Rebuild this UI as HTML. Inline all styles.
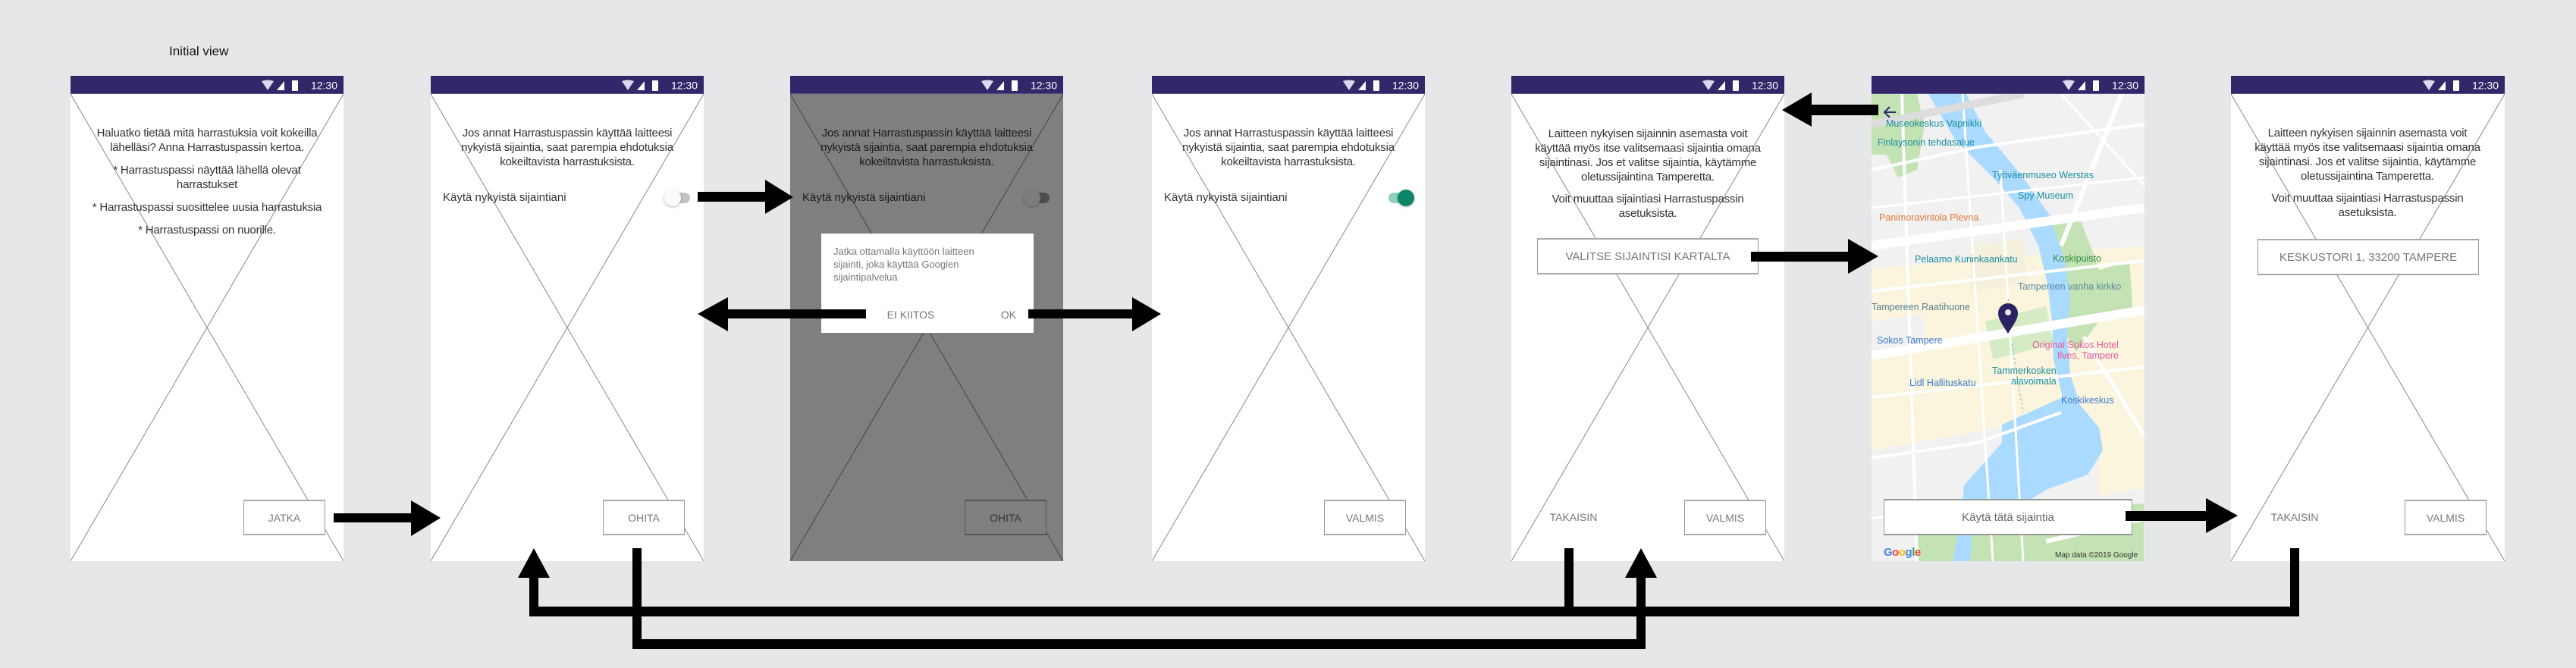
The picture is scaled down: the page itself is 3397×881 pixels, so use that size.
<!DOCTYPE html>
<html><head><meta charset="utf-8"><style>
*{margin:0;padding:0;box-sizing:border-box}
body{width:3397px;height:881px;background:#e6e7e9;position:relative;overflow:hidden;font-family:"Liberation Sans",sans-serif}
.ph{position:absolute;top:100px;width:360px;height:640px;background:#fff;overflow:hidden}
.sb{position:absolute;left:0;top:0;width:100%;height:24px;background:#33276a;border-bottom:1px solid #5a4f8c}
.sb svg{position:absolute;right:8px;top:4px}
.x{position:absolute;left:0;top:24px;width:100%;height:616px}
.t{position:absolute;left:0;width:360px;text-align:center;font-size:15px;line-height:19px;color:#333;white-space:nowrap;letter-spacing:-0.2px}
.btn{position:absolute;background:#fff;border:1px solid #999;border-top:2px solid #aaa;border-bottom:2px solid #aaa;color:#777;font-size:14px;display:flex;align-items:center;justify-content:center;white-space:nowrap}
.lbl{position:absolute;font-size:15px;color:#333;white-space:nowrap}
.ml{position:absolute;font-size:12.5px;white-space:nowrap;line-height:14px}
</style></head><body>
<div style="position:absolute;left:223px;top:58px;font-size:17px;color:#111">Initial view</div>

<!-- Phone 1 -->
<div class="ph" style="left:93px">
<svg class="x" viewBox="0 0 360 616" preserveAspectRatio="none"><line x1="0" y1="0" x2="360" y2="616" stroke="#888" stroke-width="1"/><line x1="360" y1="0" x2="0" y2="616" stroke="#888" stroke-width="1"/></svg>
<div class="sb"><svg width="100" height="17" viewBox="0 0 100 17"><path d="M0 3 Q8 0 16 3 L8 15Z" fill="#ddd8ee"/><path d="M20 15 L30 3 L30 15Z" fill="#fff"/><rect x="40" y="2" width="8" height="14" rx="1" fill="#fff"/><text x="100" y="13.5" text-anchor="end" font-size="14" fill="#fff" font-family="Liberation Sans">12:30</text></svg></div>
<div class="t" style="top:66px">Haluatko tietää mitä harrastuksia voit kokeilla<br>lähelläsi? Anna Harrastuspassin kertoa.</div>
<div class="t" style="top:115px">* Harrastuspassi näyttää lähellä olevat<br>harrastukset</div>
<div class="t" style="top:164px">* Harrastuspassi suosittelee uusia harrastuksia</div>
<div class="t" style="top:194px">* Harrastuspassi on nuorille.</div>
<div class="btn" style="left:228px;top:559px;width:108px;height:47px">JATKA</div>
</div>

<!-- Phone 2 -->
<div class="ph" style="left:568px">
<svg class="x" viewBox="0 0 360 616" preserveAspectRatio="none"><line x1="0" y1="0" x2="360" y2="616" stroke="#888" stroke-width="1"/><line x1="360" y1="0" x2="0" y2="616" stroke="#888" stroke-width="1"/></svg>
<div class="sb"><svg width="100" height="17" viewBox="0 0 100 17"><path d="M0 3 Q8 0 16 3 L8 15Z" fill="#ddd8ee"/><path d="M20 15 L30 3 L30 15Z" fill="#fff"/><rect x="40" y="2" width="8" height="14" rx="1" fill="#fff"/><text x="100" y="13.5" text-anchor="end" font-size="14" fill="#fff" font-family="Liberation Sans">12:30</text></svg></div>
<div class="t" style="top:66px">Jos annat Harrastuspassin käyttää laitteesi<br>nykyistä sijaintia, saat parempia ehdotuksia<br>kokeiltavista harrastuksista.</div>
<div class="lbl" style="left:16px;top:152px">Käytä nykyistä sijaintiani</div>
<div style="position:absolute;left:312px;top:154px;width:30px;height:14px;border-radius:7px;background:#c4c4c4"></div>
<div style="position:absolute;left:308px;top:150px;width:22px;height:22px;border-radius:11px;background:#fafafa;box-shadow:0 1px 3px rgba(0,0,0,.3)"></div>
<div class="btn" style="left:227px;top:559px;width:108px;height:47px">OHITA</div>
</div>

<!-- Phone 3 -->
<div class="ph" style="left:1042px;background:#7f807e">
<svg class="x" viewBox="0 0 360 616" preserveAspectRatio="none"><line x1="0" y1="0" x2="360" y2="616" stroke="#444" stroke-width="1"/><line x1="360" y1="0" x2="0" y2="616" stroke="#444" stroke-width="1"/></svg>
<div class="sb"><svg width="100" height="17" viewBox="0 0 100 17"><path d="M0 3 Q8 0 16 3 L8 15Z" fill="#ddd8ee"/><path d="M20 15 L30 3 L30 15Z" fill="#fff"/><rect x="40" y="2" width="8" height="14" rx="1" fill="#fff"/><text x="100" y="13.5" text-anchor="end" font-size="14" fill="#fff" font-family="Liberation Sans">12:30</text></svg></div>
<div class="t" style="top:66px;color:#1a1a1a">Jos annat Harrastuspassin käyttää laitteesi<br>nykyistä sijaintia, saat parempia ehdotuksia<br>kokeiltavista harrastuksista.</div>
<div class="lbl" style="left:16px;top:152px;color:#1a1a1a">Käytä nykyistä sijaintiani</div>
<div style="position:absolute;left:312px;top:154px;width:30px;height:14px;border-radius:7px;background:#4d4d4d"></div>
<div style="position:absolute;left:308px;top:150px;width:22px;height:22px;border-radius:11px;background:#7c7c7c;box-shadow:0 1px 3px rgba(0,0,0,.3)"></div>
<div style="position:absolute;left:41px;top:208px;width:280px;height:131px;background:#fff">
<div style="position:absolute;left:16px;top:15px;font-size:13px;line-height:17px;color:#777">Jatka ottamalla käyttöön laitteen<br>sijainti, joka käyttää Googlen<br>sijaintipalvelua</div>
<div style="position:absolute;left:78px;top:99px;width:80px;text-align:center;font-size:14px;color:#777">EI KIITOS</div>
<div style="position:absolute;left:247px;top:99px;width:40px;text-align:center;font-size:14px;color:#777;margin-left:-20px">OK</div>
</div>
<div class="btn" style="left:230px;top:559px;width:108px;height:47px;background:#7f807e;border-color:#555;color:#333">OHITA</div>
</div>

<!-- Phone 4 -->
<div class="ph" style="left:1519px">
<svg class="x" viewBox="0 0 360 616" preserveAspectRatio="none"><line x1="0" y1="0" x2="360" y2="616" stroke="#888" stroke-width="1"/><line x1="360" y1="0" x2="0" y2="616" stroke="#888" stroke-width="1"/></svg>
<div class="sb"><svg width="100" height="17" viewBox="0 0 100 17"><path d="M0 3 Q8 0 16 3 L8 15Z" fill="#ddd8ee"/><path d="M20 15 L30 3 L30 15Z" fill="#fff"/><rect x="40" y="2" width="8" height="14" rx="1" fill="#fff"/><text x="100" y="13.5" text-anchor="end" font-size="14" fill="#fff" font-family="Liberation Sans">12:30</text></svg></div>
<div class="t" style="top:66px">Jos annat Harrastuspassin käyttää laitteesi<br>nykyistä sijaintia, saat parempia ehdotuksia<br>kokeiltavista harrastuksista.</div>
<div class="lbl" style="left:16px;top:152px">Käytä nykyistä sijaintiani</div>
<div style="position:absolute;left:312px;top:154px;width:30px;height:14px;border-radius:7px;background:#8fd0bd"></div>
<div style="position:absolute;left:324px;top:150px;width:22px;height:22px;border-radius:11px;background:#0c8566;box-shadow:0 1px 3px rgba(0,0,0,.3)"></div>
<div class="btn" style="left:227px;top:559px;width:108px;height:47px">VALMIS</div>
</div>

<!-- Phone 5 -->
<div class="ph" style="left:1993px">
<svg class="x" viewBox="0 0 360 616" preserveAspectRatio="none"><line x1="0" y1="0" x2="360" y2="616" stroke="#888" stroke-width="1"/><line x1="360" y1="0" x2="0" y2="616" stroke="#888" stroke-width="1"/></svg>
<div class="sb"><svg width="100" height="17" viewBox="0 0 100 17"><path d="M0 3 Q8 0 16 3 L8 15Z" fill="#ddd8ee"/><path d="M20 15 L30 3 L30 15Z" fill="#fff"/><rect x="40" y="2" width="8" height="14" rx="1" fill="#fff"/><text x="100" y="13.5" text-anchor="end" font-size="14" fill="#fff" font-family="Liberation Sans">12:30</text></svg></div>
<div class="t" style="top:67px">Laitteen nykyisen sijainnin asemasta voit<br>käyttää myös itse valitsemaasi sijaintia omana<br>sijaintinasi. Jos et valitse sijaintia, käytämme<br>oletussijaintina Tamperetta.</div>
<div class="t" style="top:153px">Voit muuttaa sijaintiasi Harrastuspassin<br>asetuksista.</div>
<div class="btn" style="left:34px;top:214px;width:292px;height:48px;font-size:15px">VALITSE SIJAINTISI KARTALTA</div>
<div style="position:absolute;left:82px;top:574px;width:0;text-align:center;font-size:14px;color:#777"><span style="position:absolute;left:-40px;width:80px">TAKAISIN</span></div>
<div class="btn" style="left:228px;top:559px;width:108px;height:47px">VALMIS</div>
</div>

<!-- Phone 6 map -->
<div class="ph" style="left:2468px;background:#f1f1f1">
<svg style="position:absolute;left:0;top:24px" width="360" height="616" viewBox="0 0 360 616">
<rect x="0" y="0" width="360" height="616" fill="#f1f1f1"/>
<path d="M0 230 L359 200 L359 430 L300 440 L170 440 L0 470Z" fill="#fbf5de"/>
<path d="M0 300 L70 290 L70 330 L0 340Z" fill="#f1f1f1"/>
<path d="M130 200 L200 190 L205 250 L130 260Z" fill="#f5f0dc"/>
<path d="M300 430 L359 420 L359 520 L300 530Z" fill="#fbf5de"/>
<path d="M0 0 L60 0 L70 40 L60 100 L35 110 L20 80 L0 80Z" fill="#c4e3b4"/>
<path d="M225 175 L275 165 L300 230 L300 300 L270 340 L245 300 L232 250Z" fill="#c4e3b4"/>
<path d="M275 240 L340 220 L345 290 L300 300Z" fill="#c4e3b4"/>
<path d="M150 300 L230 280 L240 330 L160 350Z" fill="#d4ebc6"/>
<path d="M60 560 L359 540 L359 616 L60 616Z" fill="#c4e3b4"/>
<path d="M75 0 L110 60 L160 110 L195 150 L220 200 L232 250 L238 300 L240 350 L252 400 L172 436 L172 460 L122 516 L118 560 L107 616 L130 616 L132 580 L170 560 L230 522 L285 502 L305 470 L300 440 L275 410 L262 370 L258 320 L262 270 L255 220 L235 160 L200 110 L150 50 L125 0Z" fill="#aadaff"/>
<g stroke="#fff" fill="none">
<path d="M0 200 L359 150" stroke-width="12"/>
<path d="M0 345 L359 285" stroke-width="12"/>
<path d="M0 100 L140 70 L359 40" stroke-width="4"/>
<path d="M0 150 L359 110" stroke-width="3"/>
<path d="M0 260 L359 220" stroke-width="4"/>
<path d="M0 400 L359 360" stroke-width="4"/>
<path d="M0 480 L140 460 L250 420" stroke-width="4"/>
<path d="M0 560 L120 540" stroke-width="3"/>
<path d="M40 0 L60 616" stroke-width="4"/>
<path d="M120 0 L160 616" stroke-width="3"/>
<path d="M170 100 L200 616" stroke-width="3"/>
<path d="M330 0 L250 200" stroke-width="6"/>
<path d="M250 0 L359 120" stroke-width="3"/>
<path d="M280 320 L359 450" stroke-width="5"/>
<path d="M0 40 L200 0" stroke-width="10" stroke="#ddd"/>
<path d="M230 590 L359 560" stroke-width="6"/>
</g>
<path d="M180 270 L188 300 M185 330 L200 420" stroke="#7bc47b" stroke-dasharray="3 3" fill="none"/>
</svg>
<div class="sb"><svg width="100" height="17" viewBox="0 0 100 17"><path d="M0 3 Q8 0 16 3 L8 15Z" fill="#ddd8ee"/><path d="M20 15 L30 3 L30 15Z" fill="#fff"/><rect x="40" y="2" width="8" height="14" rx="1" fill="#fff"/><text x="100" y="13.5" text-anchor="end" font-size="14" fill="#fff" font-family="Liberation Sans">12:30</text></svg></div>
<svg style="position:absolute;left:14px;top:38px" width="22" height="20" viewBox="0 0 22 20"><path d="M18 10 H4 M10 3 L3 10 L10 17" stroke="#33276a" stroke-width="2" fill="none"/></svg>
<div class="ml" style="left:19px;top:56px;color:#1a8ea0">Museokeskus Vapriikki</div>
<div class="ml" style="left:8px;top:81px;color:#1a8ea0">Finlaysonin tehdasalue</div>
<div class="ml" style="left:159px;top:124px;color:#1a8ea0">Työväenmuseo Werstas</div>
<div class="ml" style="left:193px;top:151px;color:#1a8ea0">Spy Museum</div>
<div class="ml" style="left:10px;top:180px;color:#e07a3c">Panimoravintola Plevna</div>
<div class="ml" style="left:57px;top:235px;color:#1a8ea0">Pelaamo Kuninkaankatu</div>
<div class="ml" style="left:239px;top:234px;color:#2f8a40">Koskipuisto</div>
<div class="ml" style="left:193px;top:271px;color:#5a8aa0">Tampereen vanha kirkko</div>
<div class="ml" style="left:0px;top:298px;color:#5a7f90">Tampereen Raatihuone</div>
<div class="ml" style="left:7px;top:342px;color:#3f7ad0">Sokos Tampere</div>
<div class="ml" style="left:212px;top:348px;color:#e85a9a;text-align:right">Original Sokos Hotel<br>Ilves, Tampere</div>
<div class="ml" style="left:50px;top:398px;color:#3f7ad0">Lidl Hallituskatu</div>
<div class="ml" style="left:159px;top:382px;color:#1a8ea0;text-align:right">Tammerkosken<br>alavoimala</div>
<div class="ml" style="left:250px;top:421px;color:#3f7ad0">Koskikeskus</div>
<svg style="position:absolute;left:166px;top:299px" width="28" height="42" viewBox="0 0 28 42"><path d="M14 41 C6 28 1 22 1 14 A13 13 0 0 1 27 14 C27 22 22 28 14 41Z" fill="#2c2261"/><circle cx="14" cy="13" r="4" fill="#e6e6e6"/></svg>
<div style="position:absolute;left:16px;top:620px;font-size:15px;font-weight:bold;letter-spacing:-0.5px"><span style="color:#4285f4">G</span><span style="color:#ea4335">o</span><span style="color:#fbbc05">o</span><span style="color:#4285f4">g</span><span style="color:#34a853">l</span><span style="color:#ea4335">e</span></div>
<div style="position:absolute;left:242px;top:627px;font-size:10px;color:#333">Map data ©2019 Google</div>
<div class="btn" style="left:16px;top:558px;width:328px;height:48px;color:#666;font-size:15px;border-color:#999">Käytä tätä sijaintia</div>
</div>

<!-- Phone 7 -->
<div class="ph" style="left:2942px;width:361px">
<svg class="x" viewBox="0 0 360 616" preserveAspectRatio="none"><line x1="0" y1="0" x2="360" y2="616" stroke="#888" stroke-width="1"/><line x1="360" y1="0" x2="0" y2="616" stroke="#888" stroke-width="1"/></svg>
<div class="sb"><svg width="100" height="17" viewBox="0 0 100 17"><path d="M0 3 Q8 0 16 3 L8 15Z" fill="#ddd8ee"/><path d="M20 15 L30 3 L30 15Z" fill="#fff"/><rect x="40" y="2" width="8" height="14" rx="1" fill="#fff"/><text x="100" y="13.5" text-anchor="end" font-size="14" fill="#fff" font-family="Liberation Sans">12:30</text></svg></div>
<div class="t" style="top:66px">Laitteen nykyisen sijainnin asemasta voit<br>käyttää myös itse valitsemaasi sijaintia omana<br>sijaintinasi. Jos et valitse sijaintia, käytämme<br>oletussijaintina Tamperetta.</div>
<div class="t" style="top:152px">Voit muuttaa sijaintiasi Harrastuspassin<br>asetuksista.</div>
<div class="btn" style="left:35px;top:215px;width:292px;height:48px;font-size:15px">KESKUSTORI 1, 33200 TAMPERE</div>
<div style="position:absolute;left:84px;top:574px;width:0;font-size:14px;color:#777"><span style="position:absolute;left:-40px;width:80px;text-align:center">TAKAISIN</span></div>
<div class="btn" style="left:229px;top:559px;width:108px;height:47px">VALMIS</div>
</div>

<!-- arrows -->
<svg style="position:absolute;left:0;top:0" width="3397" height="881" viewBox="0 0 3397 881">
<g fill="#000">
<!-- phone2 toggle -> phone3 -->
<rect x="920" y="253" width="92" height="13"/><polygon points="1009,237 1046,260 1009,282"/>
<!-- EI KIITOS -> phone2 -->
<rect x="958" y="408" width="184" height="12"/><polygon points="960,392 920,414 960,437"/>
<!-- OK -> phone4 -->
<rect x="1356" y="408" width="140" height="12"/><polygon points="1493,392 1531,414 1493,437"/>
<!-- JATKA -> phone2 -->
<rect x="440" y="677" width="104" height="12"/><polygon points="542,660 581,683 542,707"/>
<!-- phone6 -> phone7 -->
<rect x="2803" y="674" width="108" height="13"/><polygon points="2909,657 2951,680 2909,703"/>
<!-- VALITSE -> map -->
<rect x="2309" y="332" width="130" height="13"/><polygon points="2437,315 2477,338 2437,361"/>
<!-- map -> phone5 -->
<rect x="2387" y="138" width="90" height="14"/><polygon points="2389,122 2350,145 2389,167"/>
<!-- connectors -->
<rect x="698" y="760" width="12" height="53"/><polygon points="704,723 683,762 725,762"/>
<rect x="834" y="723" width="12" height="133"/>
<rect x="2063" y="723" width="12" height="90"/>
<rect x="2158" y="760" width="12" height="96"/><polygon points="2164,723 2143,762 2185,762"/>
<rect x="3020" y="723" width="12" height="90"/>
<rect x="698" y="800" width="2334" height="13"/>
<rect x="834" y="843" width="1336" height="13"/>
</g>
</svg>
</body></html>
